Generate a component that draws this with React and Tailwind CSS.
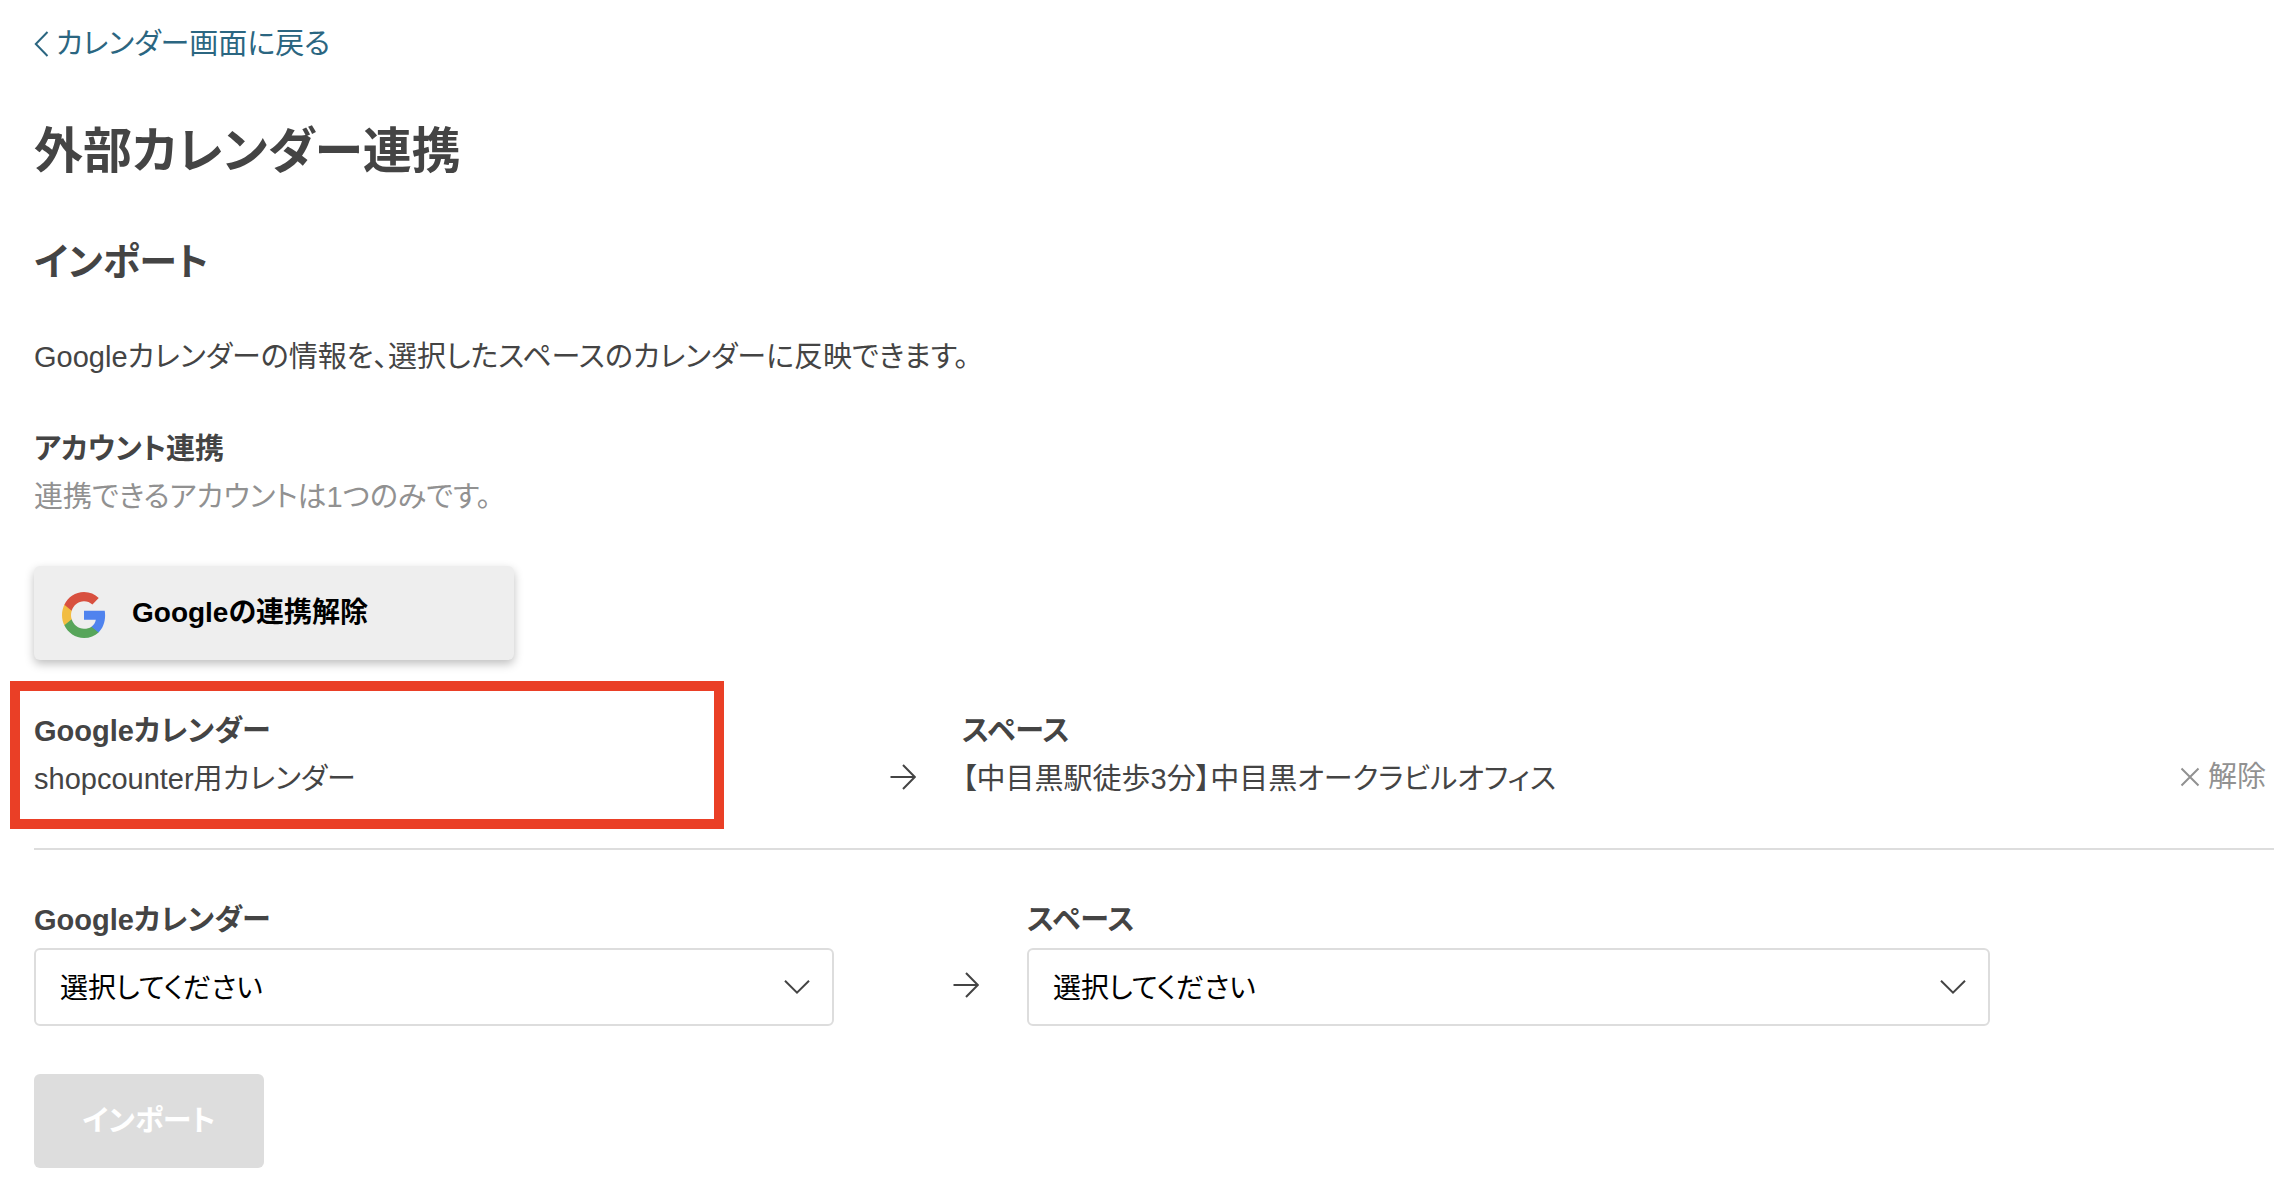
import { useState } from 'react'

const CALENDARS = ['shopcounter用カレンダー']
const SPACES = ['【中目黒駅徒歩3分】中目黒オークラビルオフィス']

function ArrowIcon() {
  return (
    <svg className="w-[26px] h-[26px] shrink-0" viewBox="0 0 26 26" fill="none" stroke="currentColor" strokeWidth="2" aria-hidden="true">
      <path d="M0.5 13H24.5M13 1L24.8 13L13 25" />
    </svg>
  )
}

function GoogleIcon() {
  return (
    <svg className="w-[44px] h-[46px] shrink-0" viewBox="2 2 44 44" preserveAspectRatio="none" aria-hidden="true">
      <path fill="#4f83ee" d="M45.12 24.5c0-1.56-.14-3.06-.4-4.5H24v8.51h11.84c-.51 2.75-2.06 5.08-4.39 6.64v5.52h7.11c4.16-3.83 6.56-9.47 6.56-16.17z" />
      <path fill="#57a55a" d="M24 46c5.94 0 10.92-1.97 14.56-5.33l-7.11-5.52c-1.97 1.32-4.49 2.1-7.45 2.1-5.73 0-10.58-3.87-12.31-9.07H4.34v5.7C7.96 41.07 15.4 46 24 46z" />
      <path fill="#f2bd42" d="M11.69 28.18C11.25 26.86 11 25.45 11 24s.25-2.86.69-4.18v-5.7H4.34C2.85 17.09 2 20.45 2 24s.85 6.91 2.34 9.88l7.35-5.7z" />
      <path fill="#d8503f" d="M24 10.75c3.23 0 6.13 1.11 8.41 3.29l6.31-6.31C34.91 4.18 29.93 2 24 2 15.4 2 7.96 6.93 4.34 14.12l7.35 5.7c1.73-5.2 6.58-9.07 12.31-9.07z" />
    </svg>
  )
}

function SelectField({ id, label, options }) {
  const [value, setValue] = useState('')

  return (
    <div>
      <label htmlFor={id} className="block text-[29px] leading-[48px] font-bold">
        {label}
      </label>
      <div className="relative mt-1">
        <select
          id={id}
          value={value}
          onChange={(e) => setValue(e.target.value)}
          className="block w-full h-[78px] pt-1 pl-6 pr-16 text-[28px] text-black bg-white border-2 border-[#dddddd] rounded-md appearance-none"
        >
          <option value="">選択してください</option>
          {options.map((o) => (
            <option key={o} value={o}>{o}</option>
          ))}
        </select>
        <svg className="absolute right-6 top-8 w-[26px] h-[14px] pointer-events-none" viewBox="0 0 26 14" fill="none" stroke="currentColor" strokeWidth="2" aria-hidden="true">
          <path d="M1 0.8L13 12.6L25 0.8" />
        </svg>
      </div>
    </div>
  )
}

export default function App() {
  return (
    <main className="pt-5 pb-6 pl-[34px] pr-[22px] bg-white text-[#444444] text-[29px] leading-[48px] font-['Liberation_Sans','Noto_Sans_CJK_JP',sans-serif] [font-feature-settings:'palt']">
      <a href="#calendar" className="inline-flex items-center gap-[6px] text-[#2b6681]">
        <svg className="w-4 h-[26px]" viewBox="0 0 16 26" fill="none" stroke="currentColor" strokeWidth="2" aria-hidden="true">
          <path d="M13.5 1L1.8 13L13.5 25" />
        </svg>
        カレンダー画面に戻る
      </a>

      <h1 className="mt-11 text-[49px] leading-[72px] font-bold">外部カレンダー連携</h1>
      <h2 className="mt-12 text-[38px] leading-[54px] font-bold">インポート</h2>
      <p className="mt-11">Googleカレンダーの情報を、選択したスペースのカレンダーに反映できます。</p>

      <h3 className="mt-11 font-bold">アカウント連携</h3>
      <p className="text-[#919191]">連携できるアカウントは1つのみです。</p>

      <button
        type="button"
        className="flex items-center gap-[26px] mt-[45px] w-[480px] h-[94px] pt-1 pl-7 rounded-md bg-[#eeeeee] text-black text-[28px] font-bold shadow-[0_4px_10px_rgba(0,0,0,0.25)]"
      >
        <GoogleIcon />
        <span className="pb-1">Googleの連携解除</span>
      </button>

      {/* 連携済みのカレンダー */}
      <section className="grid grid-cols-[856fr_72fr_1312fr] mt-[21px] pb-[19px] border-b-2 border-[#dddddd]">
        <div className="-ml-6 w-full max-w-[714px] border-10 border-[#ea3f26] pl-[14px] py-4">
          <h3 className="font-bold">Googleカレンダー</h3>
          <p>shopcounter用カレンダー</p>
        </div>
        <div className="flex items-center pt-[72px] h-[120px]">
          <ArrowIcon />
        </div>
        <div className="flex justify-between pt-[26px]">
          <div>
            <h3 className="font-bold">スペース</h3>
            <p>【中目黒駅徒歩3分】中目黒オークラビルオフィス</p>
          </div>
          <button type="button" className="flex items-center self-start gap-2 mt-[46px] mr-2 text-[#919191]">
            <svg className="w-5 h-5" viewBox="0 0 20 20" fill="none" stroke="currentColor" strokeWidth="2" aria-hidden="true">
              <path d="M1.5 1.5L18.5 18.5M18.5 1.5L1.5 18.5" />
            </svg>
            解除
          </button>
        </div>
      </section>

      {/* 新しい連携の追加 */}
      <form onSubmit={(e) => e.preventDefault()}>
        <div className="grid grid-cols-[800fr_193fr_963fr_284fr] mt-[46px]">
          <SelectField id="calendar" label="Googleカレンダー" options={CALENDARS} />
          <div className="flex items-center justify-end pt-12 pr-12">
            <ArrowIcon />
          </div>
          <SelectField id="space" label="スペース" options={SPACES} />
        </div>
        <button
          type="submit"
          disabled
          className="mt-12 w-[230px] h-[94px] rounded-md bg-[#dddddd] text-white font-bold"
        >
          インポート
        </button>
      </form>
    </main>
  )
}
